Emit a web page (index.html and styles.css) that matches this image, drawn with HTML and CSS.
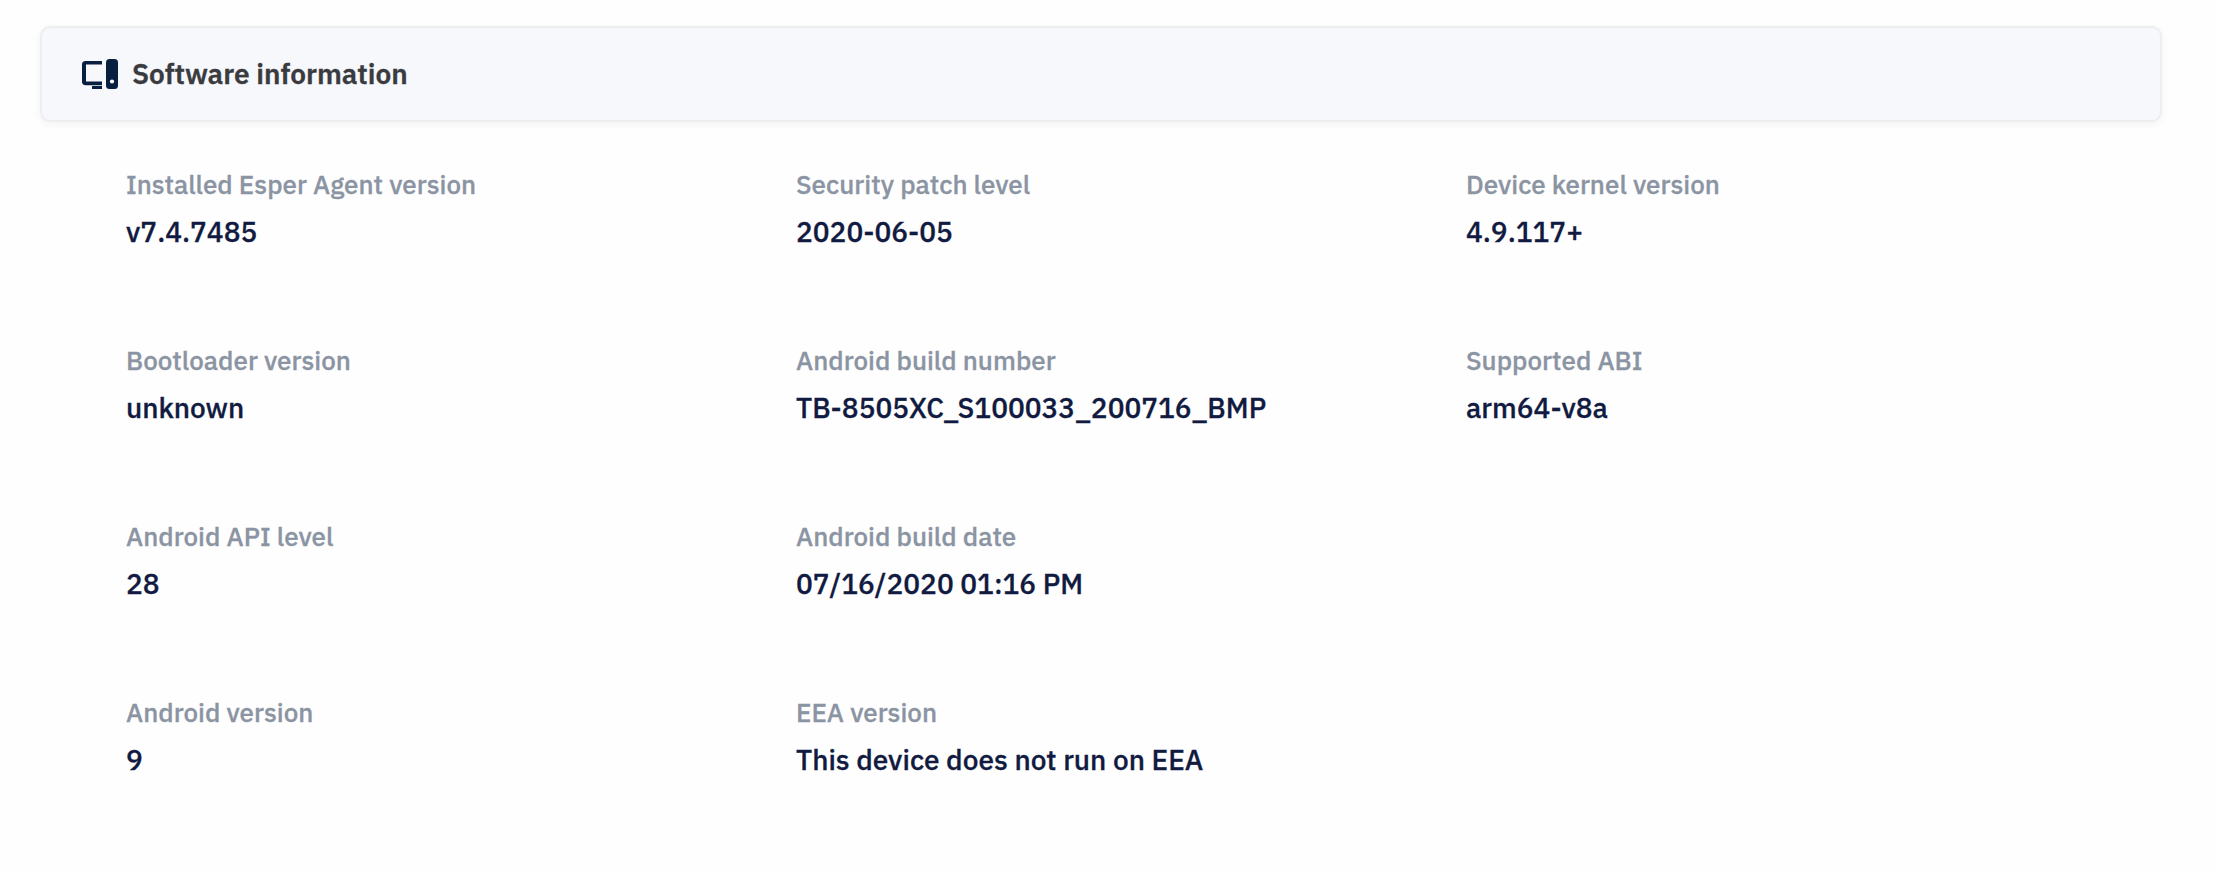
FILE: index.html
```html
<!DOCTYPE html>
<html lang="en">
<head>
<meta charset="utf-8">
<title>Software information</title>
<link rel="stylesheet" href="styles.css">
</head>
<body>
<main class="page">
  <header class="card-header">
    <svg class="icon" width="36" height="30" viewBox="0 0 36 30" aria-hidden="true">
      <path d="M20 2H3.500A3.500 3.500 0 0 0 0 5.500V22.500A3.500 3.500 0 0 0 3.500 26.300H20V22.400H4V5.400H20ZM10 26.900H20V30H10Z" fill="#081f3f"/>
      <rect x="24" y="0" width="12" height="30" rx="3.500" fill="#081f3f"/>
      <circle cx="30" cy="22.500" r="2.100" fill="#fff"/>
    </svg>
    <h1 class="title">Software information</h1>
  </header>
  <dl class="details">
    <div class="field"><dt class="label">Installed Esper Agent version</dt><dd class="value">v7.4.7485</dd></div>
    <div class="field"><dt class="label">Security patch level</dt><dd class="value">2020-06-05</dd></div>
    <div class="field"><dt class="label">Device kernel version</dt><dd class="value">4.9.117+</dd></div>
    <div class="field"><dt class="label">Bootloader version</dt><dd class="value">unknown</dd></div>
    <div class="field"><dt class="label">Android build number</dt><dd class="value">TB-8505XC_S100033_200716_BMP</dd></div>
    <div class="field"><dt class="label">Supported ABI</dt><dd class="value">arm64-v8a</dd></div>
    <div class="field first"><dt class="label">Android API level</dt><dd class="value">28</dd></div>
    <div class="field"><dt class="label">Android build date</dt><dd class="value">07/16/2020 01:16 PM</dd></div>
    <div class="field first"><dt class="label">Android version</dt><dd class="value">9</dd></div>
    <div class="field"><dt class="label">EEA version</dt><dd class="value">This device does not run on EEA</dd></div>
  </dl>
</main>
</body>
</html>
```
FILE: styles.css
```css
* { box-sizing: border-box; }
body {
  margin: 0;
  background: #fefefe;
  font-family: "IBM Plex Sans", Roboto, "Liberation Sans", sans-serif;
  font-weight: 500;
  -webkit-text-stroke: 0.3px currentColor;
}
.page { padding: 26px 54px 0 40px; }
.card-header {
  display: flex;
  align-items: center;
  gap: 14px;
  height: 96px;
  padding-left: 40px;
  border: 2px solid #eceef0;
  border-radius: 10px;
  background: #f7f8fc;
  box-shadow: 0 2px 8px rgba(0, 0, 0, 0.05);
}
.title {
  margin: 0;
  color: #3a3b3f;
  font-size: 28px;
  font-weight: 600;
  line-height: 36px;
}
.details {
  display: grid;
  grid-template-columns: repeat(3, 670px);
  grid-auto-rows: 176px;
  margin: 0;
  padding: 44px 0 0 86px;
}
.first { grid-column-start: 1; }
.label {
  color: #8b94a3;
  font-size: 26px;
  line-height: 36px;
}
.value {
  margin: 12px 0 0;
  color: #111a40;
  font-size: 28px;
  line-height: 36px;
}
```
